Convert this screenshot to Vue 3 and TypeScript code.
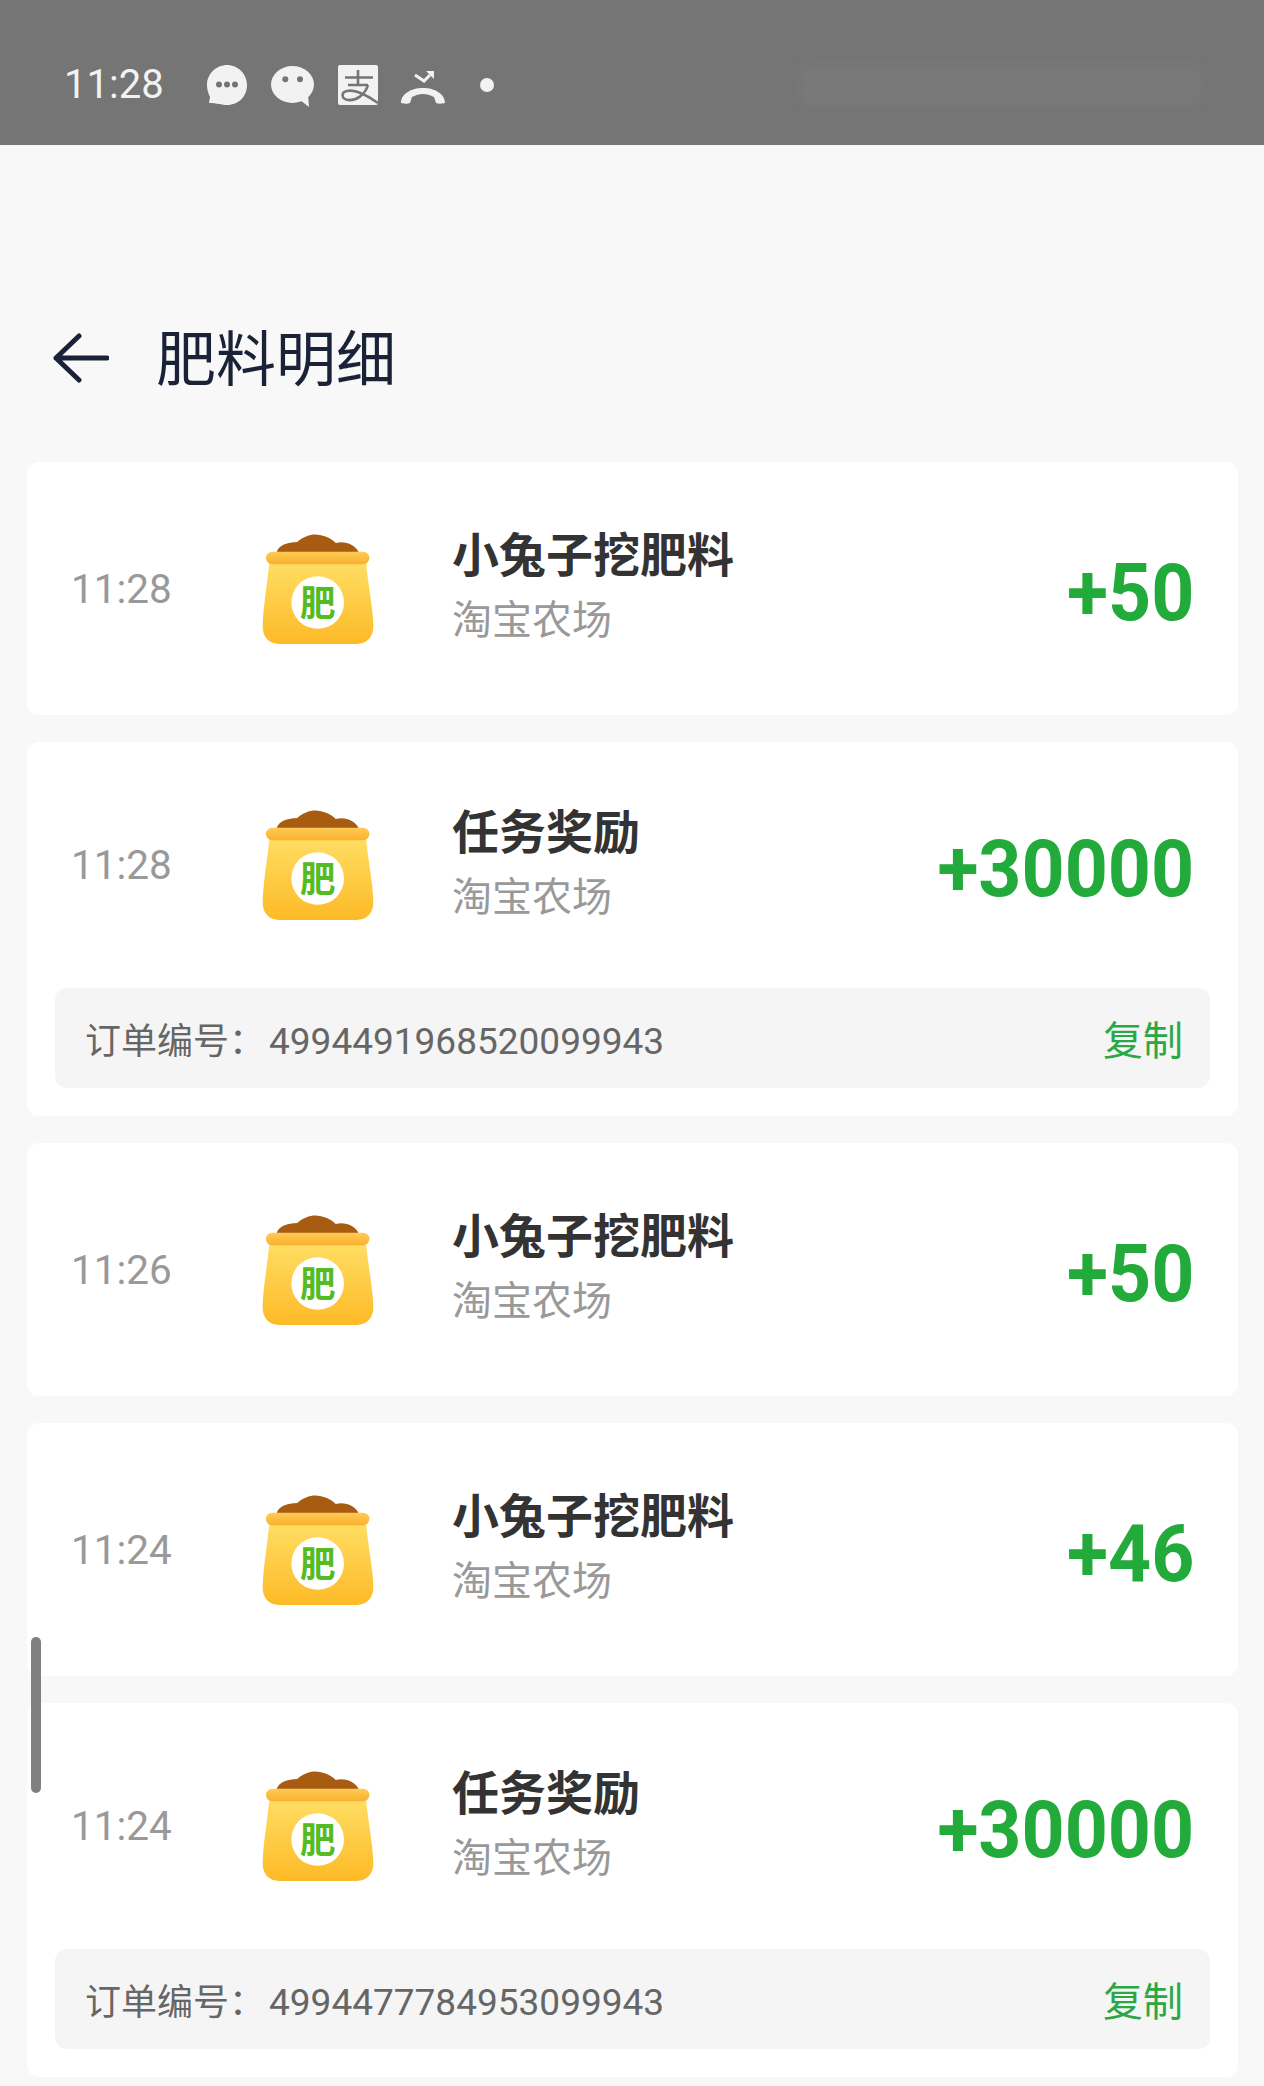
<template>
  <div class="page">
    <!-- Status bar -->
    <div class="status-bar">
      <span class="status-time">11:28</span>
      <div class="status-icons">
        <svg class="si-qq" width="40" height="40" viewBox="0 0 40 40">
          <path d="M20 0C31 0 40 9 40 20C40 31 32 40 20 40C15 40 10 38 2 38L3 32C1 28 0 24 0 20C0 9 9 0 20 0Z" fill="#f2f2f2" />
          <circle cx="12" cy="19.5" r="3" fill="#757575" />
          <circle cx="20" cy="19.5" r="3" fill="#757575" />
          <circle cx="28" cy="19.5" r="3" fill="#757575" />
        </svg>
        <svg class="si-wechat" width="43" height="41" viewBox="0 0 43 41">
          <ellipse cx="21.5" cy="18.5" rx="21.5" ry="18.5" fill="#f2f2f2" />
          <path d="M29 34L38 41L37 28Z" fill="#f2f2f2" />
          <circle cx="14.3" cy="13.3" r="3" fill="#757575" />
          <circle cx="29" cy="13.3" r="3" fill="#757575" />
        </svg>
        <svg class="si-alipay" width="40" height="40" viewBox="0 0 40 40">
          <rect width="40" height="40" rx="2" fill="#f2f2f2" />
          <path d="M7 12.5L35 12.5M20 5L20 20M10 20L30 20M30 20C27 30 18 36 10 35C3 34 3 27 9 26C17 24 30 31 40 38" stroke="#757575" stroke-width="2.6" fill="none" />
        </svg>
        <svg class="si-call" width="44" height="34" viewBox="0 0 44 34">
          <path d="M14 5L23 11L29 5" stroke="#f2f2f2" stroke-width="3" fill="none" />
          <path d="M25 1L33 1L33 9Z" fill="#f2f2f2" />
          <path d="M0 33C0 24 10 18 22 18C34 18 44 24 44 33C40 34 37 34 35 33L33 27C29 25 26 24 22 24C18 24 15 25 11 27L9 33C7 34 4 34 0 33Z" fill="#f2f2f2" />
        </svg>
        <span class="status-dot"></span>
      </div>
      <div class="status-blur"></div>
    </div>

    <!-- Title -->
    <div class="header">
      <svg width="56" height="50" viewBox="0 0 56 50">
        <path d="M26 3L3 25L26 47M3 25L54 25" stroke="#1a2238" stroke-width="5" stroke-linecap="round" stroke-linejoin="round" fill="none" />
      </svg>
      <h1 class="title">肥料明细</h1>
    </div>

    <!-- Records -->
    <div class="list">
      <div v-for="item in records" :key="item.id" class="card">
        <div :class="['row', { 'row-order': item.order }]">
          <span class="time">{{ item.time }}</span>
          <svg class="bag" width="112" height="110" viewBox="100 68 336 334">
            <defs>
              <linearGradient :id="`neck-${item.id}`" x1="0" y1="0" x2="0" y2="1">
                <stop offset="0" stop-color="#ffcb55" />
                <stop offset="1" stop-color="#fbb02e" />
              </linearGradient>
              <linearGradient :id="`body-${item.id}`" x1="0" y1="0" x2="0" y2="1">
                <stop offset="0" stop-color="#ffdd62" />
                <stop offset="1" stop-color="#fdba27" />
              </linearGradient>
            </defs>
            <path d="M142 124C148 102 175 92 205 92C222 76 248 68 265 70C290 72 310 82 322 95C350 88 382 100 392 124Z" fill="#a85c12" />
            <path d="M120 156L414 156C420 220 436 300 436 350C436 382 415 402 385 402L150 402C120 402 100 382 100 350C100 300 114 220 120 156Z" :fill="`url(#body-${item.id})`" />
            <rect x="110" y="122" width="314" height="38" rx="19" :fill="`url(#neck-${item.id})`" />
            <circle cx="267" cy="276" r="80" fill="#fff" />
            <text x="267" y="316" class="bag-text">肥</text>
          </svg>
          <div class="info">
            <div class="name">{{ item.name }}</div>
            <div class="source">淘宝农场</div>
          </div>
          <span class="amount">+{{ item.amount }}</span>
        </div>
        <div v-if="item.order" class="order">
          <span class="order-no">订单编号：<span class="order-digits">{{ item.order }}</span></span>
          <span class="copy">复制</span>
        </div>
      </div>
    </div>

    <div class="scrollbar"></div>
  </div>
</template>

<script setup lang="ts">
interface FertilizerRecord {
  id: number;
  time: string;
  name: string;
  amount: number;
  order?: string;
}

const records: FertilizerRecord[] = [
  { id: 1, time: '11:28', name: '小兔子挖肥料', amount: 50 },
  { id: 2, time: '11:28', name: '任务奖励', amount: 30000, order: '4994491968520099943' },
  { id: 3, time: '11:26', name: '小兔子挖肥料', amount: 50 },
  { id: 4, time: '11:24', name: '小兔子挖肥料', amount: 46 },
  { id: 5, time: '11:24', name: '任务奖励', amount: 30000, order: '4994477784953099943' },
];
</script>

<style>
html,
body {
  margin: 0;
  background: #f8f8f8;
}
</style>

<style scoped>
.page {
  position: relative;
  width: 1264px;
  height: 2086px;
  overflow: hidden;
  background: #f8f8f8;
  font-family: Roboto, "Noto Sans CJK SC", sans-serif;
}

.status-bar {
  display: flex;
  align-items: center;
  height: 145px;
  padding: 25px 64px 0 64px;
  box-sizing: border-box;
  background: #757575;
  color: #f2f2f2;
}

.status-time {
  width: 143px;
  font-size: 40px;
  line-height: 48px;
}

.status-icons {
  display: flex;
  align-items: center;
}

.si-wechat {
  margin-left: 24px;
  margin-top: 2px;
}

.si-alipay {
  margin-left: 24px;
}

.si-call {
  margin-left: 23px;
  margin-top: 4px;
}

.status-dot {
  width: 14px;
  height: 14px;
  margin-left: 35px;
  border-radius: 50%;
  background: #f2f2f2;
}

.status-blur {
  width: 399px;
  height: 40px;
  margin-left: auto;
  background: #797979;
  filter: blur(5px);
}

.header {
  display: flex;
  align-items: center;
  gap: 47px;
  height: 60px;
  padding: 183px 0 74px 53px;
}

.title {
  margin: 0;
  padding-top: 6px;
  font-size: 60px;
  font-weight: 400;
  line-height: 60px;
  color: #1a2238;
}

.list {
  display: flex;
  flex-direction: column;
  gap: 27px;
  padding: 0 26px 0 27px;
}

.card {
  border-radius: 12px;
  background: #fff;
}

.row {
  display: flex;
  align-items: center;
  height: 253px;
  padding: 0 44px 0 44px;
  box-sizing: border-box;
}

.row-order {
  height: 246px;
}

.time {
  width: 192px;
  font-size: 40.5px;
  color: #999;
}

.bag {
  flex-shrink: 0;
  margin-left: -1px;
}

.bag-text {
  font-size: 108px;
  font-weight: 700;
  fill: #55bb22;
  text-anchor: middle;
}

.info {
  flex: 1;
  margin-left: 78px;
}

.name {
  font-size: 47px;
  font-weight: 700;
  line-height: 64px;
  color: #333;
}

.source {
  padding-top: 1px;
  font-size: 40px;
  line-height: 64px;
  color: #999;
}

/* DIN-like digits: Roboto squeezed a little */
.amount {
  display: inline-block;
  padding-top: 8px;
  font-size: 80px;
  font-weight: 700;
  color: #22aa3a;
  transform: scaleX(0.94);
  transform-origin: right center;
}

.order {
  display: flex;
  align-items: center;
  justify-content: space-between;
  height: 100px;
  margin: 0 28px 28px;
  padding: 0 27px 0 30px;
  border-radius: 12px;
  background: #f5f5f5;
}

.order-no {
  font-size: 36px;
  color: #666;
}

.order-digits {
  margin-left: 4px;
  font-size: 37px;
}

.copy {
  font-size: 40px;
  color: #2aa845;
}

.scrollbar {
  position: absolute;
  top: 1637px;
  left: 31px;
  width: 10px;
  height: 156px;
  border-radius: 5px;
  background: #808080;
}
</style>
